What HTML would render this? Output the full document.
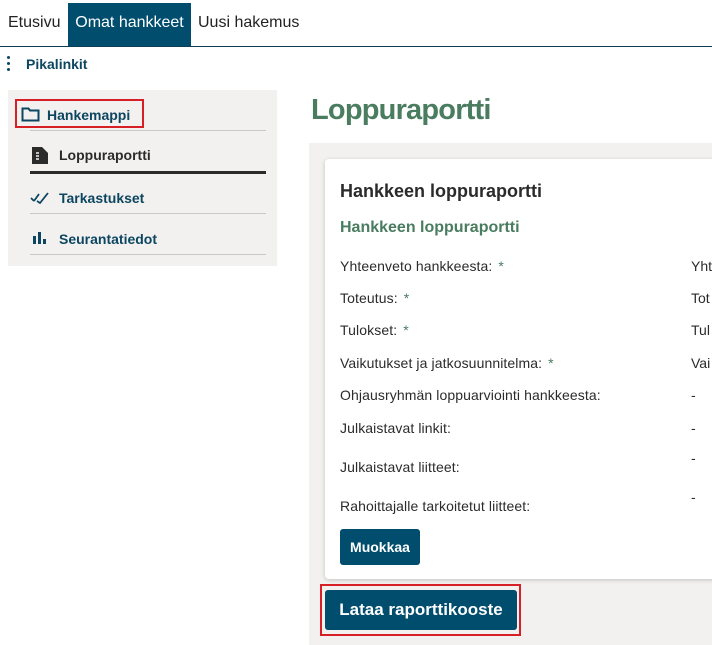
<!DOCTYPE html>
<html><head><meta charset="utf-8"><style>
*{margin:0;padding:0;box-sizing:border-box}
body{width:712px;height:645px;overflow:hidden;background:#fff;font-family:"Liberation Sans",sans-serif;position:relative;color:#2b2b2b}
.a{position:absolute;white-space:nowrap}
.tab{position:absolute;top:3px;height:43px;line-height:40px;font-size:16px;color:#222}
.nav{color:#0d4660;font-weight:bold;font-size:14px}
.hr{position:absolute;height:1px;background:#c8c8c8}
.row{position:absolute;left:340px;font-size:14px;color:#2b2b2b;letter-spacing:0.1px}
.row b{color:#4a7c5f;font-weight:normal;margin-left:6px}
.val{position:absolute;left:691px;font-size:14px;color:#2b2b2b}
</style></head><body>
<div class="tab" style="left:8px">Etusivu</div>
<div class="tab" style="left:68px;width:123px;background:#004d6e;color:#fff;text-align:center">Omat hankkeet</div>
<div class="tab" style="left:198px">Uusi hakemus</div>
<div class="a" style="left:0;top:46px;width:712px;height:1px;background:#0d3e55"></div>
<div class="a" style="left:7px;top:56px;width:3px;height:3px;border-radius:2px;background:#0d4660;box-shadow:0 6px 0 #0d4660,0 12px 0 #0d4660"></div>
<div class="a nav" style="left:26px;top:56px">Pikalinkit</div>

<div class="a" style="left:8px;top:90px;width:269px;height:176px;background:#f2f1ef"></div>
<div class="a" style="left:15px;top:99px;width:129px;height:29px;border:2px solid #d71f26"></div>
<svg class="a" style="left:21px;top:107px" width="19" height="15" viewBox="0 0 19 15"><path d="M1.5 1.5h6l1.5 2h8.5v10h-16z" fill="none" stroke="#0d4660" stroke-width="2"/></svg>
<div class="a nav" style="left:47px;top:107px">Hankemappi</div>
<div class="hr" style="left:30px;top:130px;width:236px"></div>
<svg class="a" style="left:32px;top:147px" width="16" height="17" viewBox="0 0 16 17"><path d="M0 0h10l6 6v11h-16z" fill="#2b2b2b"/><path d="M4 6h3M4 9h3M4 12h3" stroke="#f2f1ef" stroke-width="1.5"/></svg>
<div class="a nav" style="left:59px;top:147px;color:#2b2b2b">Loppuraportti</div>
<div class="a" style="left:30px;top:171px;width:236px;height:3px;background:#2b2b2b"></div>
<svg class="a" style="left:30px;top:192px" width="20" height="12" viewBox="0 0 20 12"><path d="M1 6l3 3M4 9l5-7M7 9l3 2 8-10" fill="none" stroke="#0d4660" stroke-width="1.8"/></svg>
<div class="a nav" style="left:59px;top:190px">Tarkastukset</div>
<div class="hr" style="left:30px;top:213px;width:236px"></div>
<svg class="a" style="left:33px;top:232px" width="14" height="12"><rect x="0" y="4" width="3" height="8" fill="#0d4660"/><rect x="5" y="0" width="3" height="12" fill="#0d4660"/><rect x="10" y="7" width="3" height="5" fill="#0d4660"/></svg>
<div class="a nav" style="left:59px;top:231px">Seurantatiedot</div>
<div class="hr" style="left:30px;top:254px;width:236px"></div>

<div class="a" style="left:311px;top:94px;font-size:29px;font-weight:bold;color:#4a7c5f;letter-spacing:-0.8px">Loppuraportti</div>
<div class="a" style="left:309px;top:143px;width:403px;height:502px;background:#f2f1ef"></div>
<div class="a" style="left:325px;top:159px;width:400px;height:420px;background:#fff;border-radius:4px;box-shadow:0 1px 4px rgba(0,0,0,.2)"></div>
<div class="a" style="left:340px;top:181px;font-size:18px;font-weight:bold">Hankkeen loppuraportti</div>
<div class="a" style="left:340px;top:219px;font-size:16px;font-weight:bold;color:#4a7c5f">Hankkeen loppuraportti</div>
<div class="row" style="top:258px">Yhteenveto hankkeesta:<b>*</b></div><div class="val" style="top:258px">Yht</div>
<div class="row" style="top:290px">Toteutus:<b>*</b></div><div class="val" style="top:290px">Tot</div>
<div class="row" style="top:322px">Tulokset:<b>*</b></div><div class="val" style="top:322px">Tul</div>
<div class="row" style="top:355px">Vaikutukset ja jatkosuunnitelma:<b>*</b></div><div class="val" style="top:355px">Vai</div>
<div class="row" style="top:387px">Ohjausryhmän loppuarviointi hankkeesta:</div><div class="val" style="top:387px">-</div>
<div class="row" style="top:420px">Julkaistavat linkit:</div><div class="val" style="top:420px">-</div>
<div class="row" style="top:459px">Julkaistavat liitteet:</div><div class="val" style="top:450px">-</div>
<div class="row" style="top:498px">Rahoittajalle tarkoitetut liitteet:</div><div class="val" style="top:489px">-</div>
<div class="a" style="left:340px;top:529px;width:80px;height:36px;background:#004d6e;border-radius:3px;color:#fff;font-weight:bold;font-size:14px;line-height:36px;text-align:center">Muokkaa</div>
<div class="a" style="left:320px;top:584px;width:201px;height:52px;border:2px solid #d71f26"></div>
<div class="a" style="left:325px;top:590px;width:192px;height:40px;background:#004d6e;border-radius:3px;color:#fff;font-weight:bold;font-size:17px;line-height:40px;text-align:center">Lataa raporttikooste</div>
</body></html>
